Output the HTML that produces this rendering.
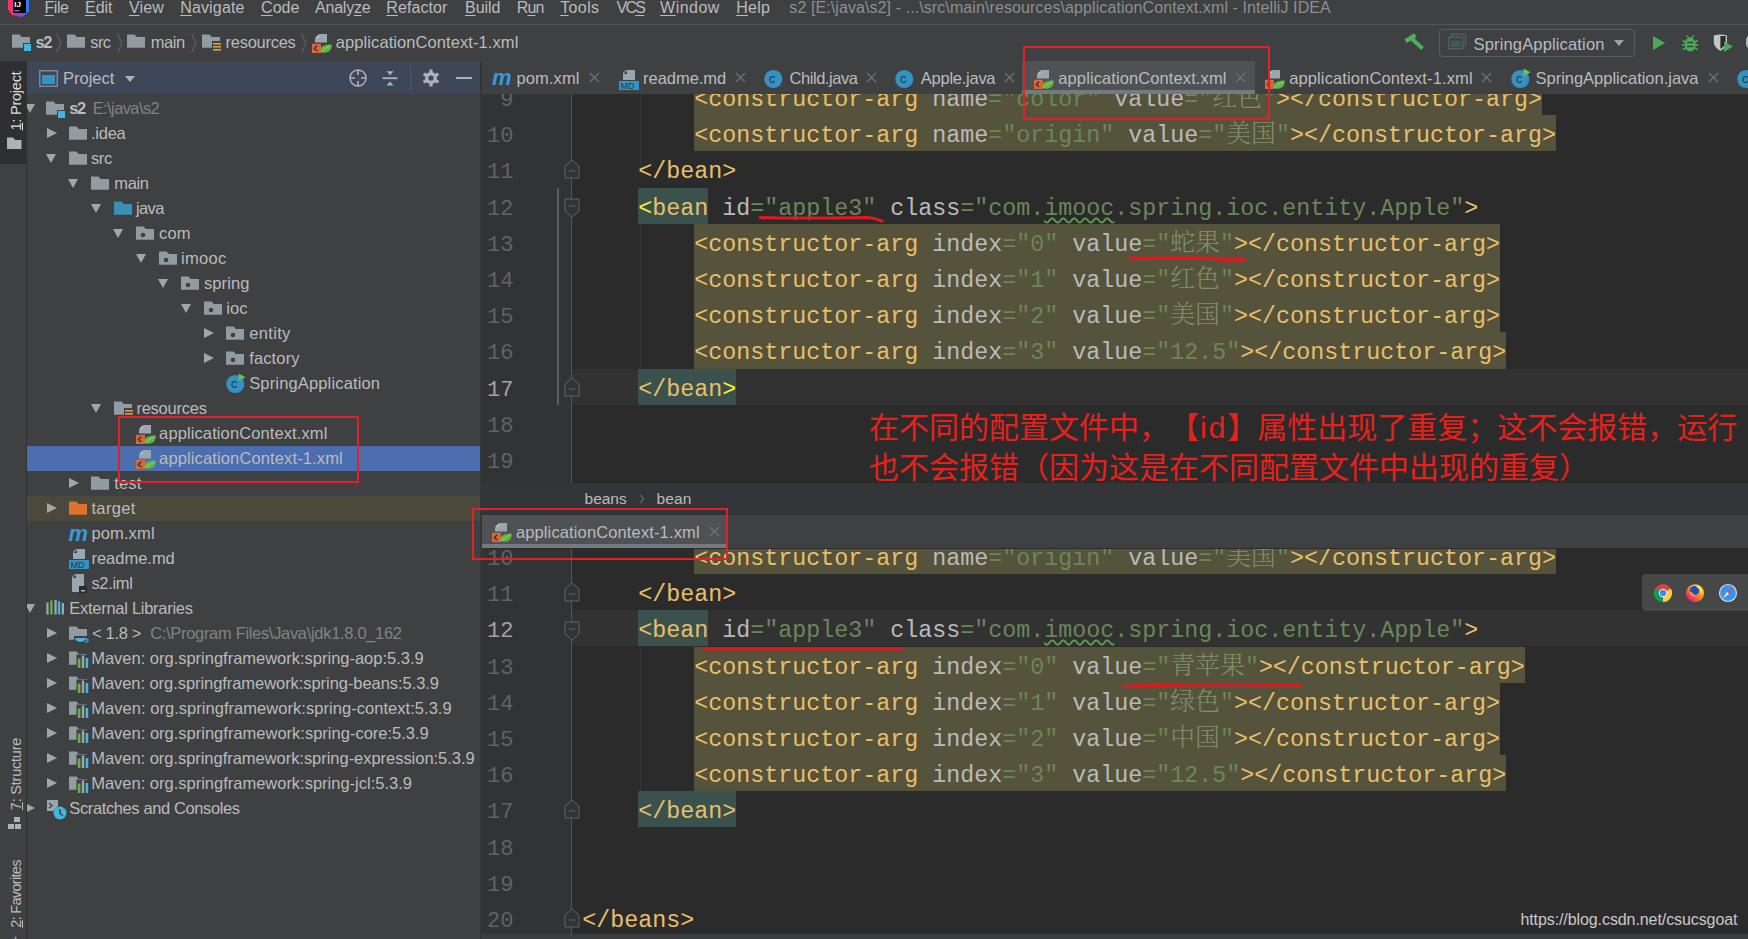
<!DOCTYPE html><html><head><meta charset="utf-8"><title>IntelliJ IDEA</title><style>
*{box-sizing:border-box;margin:0;padding:0}
html,body{width:1748px;height:939px;overflow:hidden;background:#2b2b2b}
body{position:relative;font-family:"Liberation Sans", "Noto Sans CJK SC", sans-serif;font-size:16.5px;color:#bbbbbb;-webkit-font-smoothing:antialiased}
.abs{position:absolute}
#menubar{left:0;top:0;width:1748px;height:25px;background:#3e4042;border-bottom:1px solid #515354}
#menubar span{position:absolute;top:-2px;font-size:16px;color:#bbbbbb;white-space:nowrap;line-height:20px}
#menubar u{text-decoration:underline;text-underline-offset:1.5px;text-decoration-thickness:1px}
#navbar{left:0;top:25px;width:1748px;height:36px;background:#3e4042}
#navbar .t{position:absolute;top:7px;font-size:16.5px;line-height:20px;color:#bbbbbb;white-space:nowrap}
#strip{left:0;top:61px;width:27px;height:878px;background:#3e4042;border-right:1px solid #323232}
#phead{left:27px;top:61px;width:453px;height:33px;background:#3e4758}
#tree{left:27px;top:94px;width:453px;height:845px;background:#3e4042;overflow:hidden}
.row{position:absolute;left:0;width:453px;height:25px;white-space:nowrap}
.row .lbl{position:absolute;top:2.5px;line-height:20px;font-size:16.5px;color:#bbbbbb}
.row .gray{color:#7f8486}
.arrow{position:absolute;width:0;height:0}
.ar{border-left:10px solid #a3a5a6;border-top:5.5px solid transparent;border-bottom:5.5px solid transparent}
.ad{border-top:9.5px solid #a3a5a6;border-left:5.5px solid transparent;border-right:5.5px solid transparent}
#split{left:480px;top:61px;width:2px;height:878px;background:linear-gradient(90deg,#343638 0,#343638 50%,#34373a 50%,#34373a 100%)}
.tabs{background:#3e4042;overflow:hidden}
.tab{position:absolute;top:0;height:100%;white-space:nowrap}
.tl{font-size:16.5px;line-height:20px;color:#bbbbbb;white-space:nowrap}
.tab .x{position:absolute;color:#6e7173;font-size:15px;line-height:20px}
.ed{background:#2b2b2b;overflow:hidden}
.gut{position:absolute;left:0;top:0;width:89px;height:100%;background:#313335}
.gl{position:absolute;left:89px;top:0;width:1px;height:100%;background:#555555}
.ln{position:absolute;left:0;width:31.5px;text-align:right;font-family:"Liberation Mono", "Noto Serif CJK SC", monospace;font-size:22px;color:#606366;line-height:calc(var(--lh) + 1.2px);height:36.2px}
.cl{position:absolute;left:0;height:36.2px;line-height:36.2px;font-family:"Liberation Mono", "Noto Serif CJK SC", monospace;font-size:23.33px;white-space:pre;color:#a9b7c6}
.cl span{display:inline-block;height:36.2px;vertical-align:top;line-height:var(--lh)}
.cl span span{display:inline;line-height:inherit}
.cj{position:relative;top:0px;line-height:0;font-style:normal;font-size:24.9px;font-weight:300;color:#7f8f6c;font-family:"Noto Serif CJK SC",serif}
.t{color:#e8bf6a}
.a{color:#bababa}
.v{color:#6a8759}
.w{background:#55533c}
.m{background:#3b514d}
.cur{position:absolute;left:89px;right:0;height:36.2px;background:#323232}
</style></head><body>
<div id="menubar" class="abs">
<svg class="abs" style="left:8px;top:0" width="22" height="18" viewBox="0 0 22 18"><path d="M0 0 H21 L21 11 L14 17 L4 15 L0 9 Z" fill="#9a3fd8"/><path d="M0 0 H6 V15.4 L4 15 L0 9 Z" fill="#f0356b"/><path d="M16 0 H21 V11 L16 15.3 Z" fill="#2f7cf6"/><rect x="5" y="0" width="13" height="13" fill="#000"/><rect x="6.5" y="10.2" width="5" height="1.1" fill="#aaa"/><text x="6.3" y="7.3" font-size="8" font-weight="bold" fill="#fff" font-family="Liberation Sans, sans-serif">IJ</text></svg>
<span style="left:44.5px;letter-spacing:-0.449px;"><u>F</u>ile</span>
<span style="left:85px;letter-spacing:-0.020px;"><u>E</u>dit</span>
<span style="left:128.9px;letter-spacing:0.198px;"><u>V</u>iew</span>
<span style="left:180.2px;letter-spacing:0.155px;"><u>N</u>avigate</span>
<span style="left:261px;letter-spacing:0.059px;"><u>C</u>ode</span>
<span style="left:315px;letter-spacing:-0.220px;">Analy<u>z</u>e</span>
<span style="left:386.3px;letter-spacing:0.089px;"><u>R</u>efactor</span>
<span style="left:465px;letter-spacing:-0.056px;"><u>B</u>uild</span>
<span style="left:516.7px;letter-spacing:-0.792px;">R<u>u</u>n</span>
<span style="left:560.2px;letter-spacing:0.388px;"><u>T</u>ools</span>
<span style="left:616.6px;letter-spacing:-1.735px;">VC<u>S</u></span>
<span style="left:660.1px;letter-spacing:0.463px;"><u>W</u>indow</span>
<span style="left:736.2px;letter-spacing:0.270px;"><u>H</u>elp</span>
<span style="left:789.3px;color:#8c8f91;letter-spacing:0.090px;">s2 [E:\java\s2] - ...\src\main\resources\applicationContext.xml - IntelliJ IDEA</span>
</div>
<div id="navbar" class="abs">
<svg class="abs" style="left:12px;top:8px" width="22" height="19.3" viewBox="0 0 22 19.3"><path d="M0 1.5 h7.56 l2.2 2.5 h8.239999999999998 v10.8 h-18 z" fill="#909ba2"/><rect x="11" y="10" width="8" height="8" fill="#3e4042"/><rect x="12" y="11" width="7" height="7" fill="#40b6e0"/></svg>
<span class="t" style="left:35.5px;font-weight:bold;letter-spacing:-1.430px;">s2</span>
<svg class="abs" style="left:67px;top:8px" width="22" height="19.3" viewBox="0 0 22 19.3"><path d="M0 1.5 h7.56 l2.2 2.5 h8.239999999999998 v10.8 h-18 z" fill="#909ba2"/></svg>
<span class="t" style="left:90.2px;font-weight:normal;letter-spacing:-0.533px;">src</span>
<svg class="abs" style="left:127px;top:8px" width="22" height="19.3" viewBox="0 0 22 19.3"><path d="M0 1.5 h7.56 l2.2 2.5 h8.239999999999998 v10.8 h-18 z" fill="#909ba2"/></svg>
<span class="t" style="left:150.8px;font-weight:normal;letter-spacing:-0.441px;">main</span>
<svg class="abs" style="left:202px;top:8px" width="22" height="19.3" viewBox="0 0 22 19.3"><path d="M0 1.5 h7.56 l2.2 2.5 h8.239999999999998 v10.8 h-18 z" fill="#909ba2"/><rect x="10" y="8" width="9" height="10" fill="#3e4042"/><rect x="11" y="10" width="8" height="1.6" fill="#d9a343"/><rect x="11" y="13" width="8" height="1.6" fill="#d9a343"/><rect x="11" y="16" width="8" height="1.6" fill="#d9a343"/></svg>
<span class="t" style="left:225.5px;font-weight:normal;letter-spacing:-0.261px;">resources</span>
<svg class="abs" style="left:312px;top:7.6px" width="22" height="22" viewBox="0 0 22 22"><path d="M7.5 1 H15 V9.6 H3 V5.5 Z" fill="#9aa7b0"/><path d="M6.8 1.2 V4.8 H3.2 Z" fill="#b9c3c9"/><rect x="0" y="10.8" width="9" height="9.2" fill="#d4683a"/><path d="M5.2 12.8 L2.3 15.4 L5.2 18" stroke="#4a2a1c" fill="none" stroke-width="1.3"/><path d="M8.6 18.6 C7.6 14 11.5 11.6 19.6 11.6 C20.4 17.5 15.5 21 9.6 19.4 Z" fill="#62b543"/><path d="M9.2 18.8 C12 16 15 14.4 18.4 13" stroke="#9ad77f" fill="none" stroke-width="0.8"/></svg>
<span class="t" style="left:335.8px;font-weight:normal;letter-spacing:0.080px;">applicationContext-1.xml</span>
<svg class="abs" style="left:54.5px;top:6px" width="8" height="24" viewBox="0 0 8 24"><path d="M1.5 2.5 L6 12 L1.5 21.5" stroke="#5e6163" fill="none" stroke-width="1.1"/></svg>
<svg class="abs" style="left:115.5px;top:6px" width="8" height="24" viewBox="0 0 8 24"><path d="M1.5 2.5 L6 12 L1.5 21.5" stroke="#5e6163" fill="none" stroke-width="1.1"/></svg>
<svg class="abs" style="left:189.5px;top:6px" width="8" height="24" viewBox="0 0 8 24"><path d="M1.5 2.5 L6 12 L1.5 21.5" stroke="#5e6163" fill="none" stroke-width="1.1"/></svg>
<svg class="abs" style="left:300px;top:6px" width="8" height="24" viewBox="0 0 8 24"><path d="M1.5 2.5 L6 12 L1.5 21.5" stroke="#5e6163" fill="none" stroke-width="1.1"/></svg>
<svg class="abs" style="left:1400px;top:5px" width="28" height="24" viewBox="0 0 28 24"><g stroke="#4fae5b" fill="none"><path d="M11.5 8.5 L22.6 18.6" stroke-width="4"/><path d="M5.6 11.2 L15.4 5.2" stroke-width="4.4"/></g></svg>
<div class="abs" style="left:1439px;top:4px;width:196px;height:27.5px;border:1px solid #5a5d5f;border-radius:4px"></div>
<svg class="abs" style="left:1448px;top:8px" width="20" height="18" viewBox="0 0 20 18"><rect x="3.7" y="1.2" width="14" height="11.5" fill="none" stroke="#585c5e" stroke-width="1.4"/><rect x="0.7" y="4.2" width="14" height="11.5" fill="#3e4042" stroke="#585c5e" stroke-width="1.4"/><rect x="2.6" y="7.4" width="10.2" height="6.6" fill="#3f5a52"/></svg>
<span class="t" style="left:1473.5px;top:8.5px;letter-spacing:0.158px;">SpringApplication</span>
<div class="abs" style="left:1614px;top:15px;width:0;height:0;border-top:6px solid #9da0a2;border-left:5px solid transparent;border-right:5px solid transparent"></div>
<div class="abs" style="left:1653px;top:10.8px;width:0;height:0;border-left:12px solid #4aaa55;border-top:7.2px solid transparent;border-bottom:7.2px solid transparent"></div>
<svg class="abs" style="left:1680px;top:8px" width="20" height="20" viewBox="0 0 20 20"><g fill="#4aaa55"><ellipse cx="10.2" cy="11.6" rx="5.6" ry="7"/><path d="M6 3 l1 -1 l3.2 3.4 l3.2 -3.4 l1 1 l-3.4 3.6 h-1.6 z"/></g><path d="M2.6 7.6 l3 1.6 M17.8 7.6 l-3 1.6 M2 12 h3 M18.4 12 h-3 M2.8 16.6 l3 -1.6 M17.6 16.6 l-3 -1.6" stroke="#4aaa55" stroke-width="1.7"/><path d="M7.2 9.6 h6 M7.2 13.4 h6" stroke="#3e4042" stroke-width="1.5"/></svg>
<svg class="abs" style="left:1712px;top:8px" width="24" height="22" viewBox="0 0 24 22"><path d="M1.8 2.6 Q8.4 0.6 15 2.6 V9 C15 14.5 8.4 17.8 8.4 17.8 C8.4 17.8 1.8 14.5 1.8 9 Z" fill="#c4c6c8"/><path d="M8.4 3 H13.6 V9.6 C13.600 13 8.4 16 8.4 16 Z" fill="#2b2b2b"/><path d="M12 8.4 l8.8 5.2 l-8.8 5.4 z" fill="#4aaa55"/></svg>
<div class="abs" style="left:1745.5px;top:10px;width:10px;height:14px;border-radius:7px;background:#afb1b3"></div>
</div>
<div id="strip" class="abs">
<div class="abs" style="left:0;top:0;width:27px;height:103px;background:#2d2f30"></div>
<div class="abs" style="left:15.6px;top:40px;width:0;height:0"><div style="position:absolute;transform:translate(-50%,-50%) rotate(-90deg);white-space:nowrap;font-size:14.5px;line-height:16px;color:#dcdcdc;letter-spacing:-0.227px;"><u>1</u>: Project</div></div>
<svg class="abs" style="left:7px;top:75px" width="18.5" height="17.5" viewBox="0 0 18.5 17.5"><path d="M0 1.5 h6.09 l2.2 2.5 h6.21 v9.0 h-14.5 z" fill="#afb1b3"/></svg>
<div class="abs" style="left:15.6px;top:713px;width:0;height:0"><div style="position:absolute;transform:translate(-50%,-50%) rotate(-90deg);white-space:nowrap;font-size:14.5px;line-height:16px;color:#bbbbbb;letter-spacing:-0.214px;"><u>7</u>: Structure</div></div>
<svg class="abs" style="left:8px;top:756px" width="14" height="14" viewBox="0 0 14 14"><rect x="6" y="0" width="6" height="5" fill="#afb1b3"/><rect x="0" y="7" width="6" height="5" fill="#afb1b3"/><rect x="7" y="7" width="6" height="5" fill="#afb1b3"/></svg>
<div class="abs" style="left:15.6px;top:832.8px;width:0;height:0"><div style="position:absolute;transform:translate(-50%,-50%) rotate(-90deg);white-space:nowrap;font-size:14.5px;line-height:16px;color:#bbbbbb;letter-spacing:-0.689px;"><u>2</u>: Favorites</div></div>
<div class="abs" style="left:9px;top:870px;color:#afb1b3;font-size:13px">★</div>
</div>
<div id="phead" class="abs">
<svg class="abs" style="left:12px;top:9px" width="20" height="18" viewBox="0 0 20 18"><rect x="0.75" y="0.75" width="17.5" height="15.5" fill="none" stroke="#7c8791" stroke-width="1.5"/><rect x="3" y="5" width="13" height="9" fill="#3592c4"/></svg>
<span class="abs" style="left:36px;top:7px;font-size:16.5px;line-height:20px;color:#bbbbbb">Project</span>
<div class="abs" style="left:98px;top:15px;width:0;height:0;border-top:6px solid #afb1b3;border-left:5.5px solid transparent;border-right:5.5px solid transparent"></div>
<svg class="abs" style="left:321px;top:7px" width="20" height="20" viewBox="0 0 20 20"><circle cx="10" cy="10" r="8" fill="none" stroke="#afb1b3" stroke-width="1.5"/><path d="M10 2 v5 M10 13 v5 M2 10 h5 M13 10 h5" stroke="#afb1b3" stroke-width="1.6"/></svg>
<svg class="abs" style="left:354px;top:6px" width="18" height="22" viewBox="0 0 18 22"><path d="M1.5 11.2 h15" stroke="#afb1b3" stroke-width="1.8"/><path d="M5.5 4.2 h7 l-3.5 4 z M5.5 18.4 h7 l-3.5 -4 z" fill="#afb1b3"/></svg>
<div class="abs" style="left:383px;top:4px;width:1px;height:26px;background:#4d5666"></div>
<svg class="abs" style="left:394.8px;top:8px" width="18" height="18" viewBox="0 0 18 18"><g fill="#afb1b3"><circle cx="9" cy="9" r="6"/><rect x="7.4" y="0.5" width="3.2" height="17" rx="0.6"/><rect x="7.4" y="0.5" width="3.2" height="17" rx="0.6" transform="rotate(60 9 9)"/><rect x="7.4" y="0.5" width="3.2" height="17" rx="0.6" transform="rotate(120 9 9)"/></g><circle cx="9" cy="9" r="2.6" fill="#3e4758"/></svg>
<div class="abs" style="left:429px;top:16px;width:16px;height:2px;background:#afb1b3"></div>
</div>
<div id="tree" class="abs">
<div class="row" style="top:1.5px;">
<div class="arrow ad" style="left:-2.5px;top:8px"></div>
<svg class="abs" style="left:19px;top:4px" width="22" height="19.3" viewBox="0 0 22 19.3"><path d="M0 1.5 h7.56 l2.2 2.5 h8.239999999999998 v10.8 h-18 z" fill="#909ba2"/><rect x="11" y="10" width="8" height="8" fill="#3e4042"/><rect x="12" y="11" width="7" height="7" fill="#40b6e0"/></svg>
<span class="lbl" style="left:42.3px;font-weight:bold;letter-spacing:-1.530px;">s2</span>
<span class="lbl gray" style="left:65.7px;letter-spacing:-0.597px;">E:\java\s2</span>
</div>
<div class="row" style="top:26.5px;">
<div class="arrow ar" style="left:20px;top:7px"></div>
<svg class="abs" style="left:42px;top:4px" width="22" height="19.3" viewBox="0 0 22 19.3"><path d="M0 1.5 h7.56 l2.2 2.5 h8.239999999999998 v10.8 h-18 z" fill="#909ba2"/></svg>
<span class="lbl" style="left:64px;font-weight:normal;letter-spacing:-0.256px;">.idea</span>
</div>
<div class="row" style="top:51.5px;">
<div class="arrow ad" style="left:19px;top:8px"></div>
<svg class="abs" style="left:42px;top:4px" width="22" height="19.3" viewBox="0 0 22 19.3"><path d="M0 1.5 h7.56 l2.2 2.5 h8.239999999999998 v10.8 h-18 z" fill="#909ba2"/></svg>
<span class="lbl" style="left:64px;font-weight:normal;letter-spacing:-0.400px;">src</span>
</div>
<div class="row" style="top:76.5px;">
<div class="arrow ad" style="left:41px;top:8px"></div>
<svg class="abs" style="left:64px;top:4px" width="22" height="19.3" viewBox="0 0 22 19.3"><path d="M0 1.5 h7.56 l2.2 2.5 h8.239999999999998 v10.8 h-18 z" fill="#909ba2"/></svg>
<span class="lbl" style="left:87.3px;font-weight:normal;letter-spacing:-0.391px;">main</span>
</div>
<div class="row" style="top:101.5px;">
<div class="arrow ad" style="left:64px;top:8px"></div>
<svg class="abs" style="left:87px;top:4px" width="22" height="19.3" viewBox="0 0 22 19.3"><path d="M0 1.5 h7.56 l2.2 2.5 h8.239999999999998 v10.8 h-18 z" fill="#3a8fb7"/></svg>
<span class="lbl" style="left:109px;font-weight:normal;letter-spacing:-0.620px;">java</span>
</div>
<div class="row" style="top:126.5px;">
<div class="arrow ad" style="left:86px;top:8px"></div>
<svg class="abs" style="left:109px;top:4px" width="22" height="19.3" viewBox="0 0 22 19.3"><path d="M0 1.5 h7.56 l2.2 2.5 h8.239999999999998 v10.8 h-18 z" fill="#909ba2"/><circle cx="7" cy="10" r="2.3" fill="#3e4042"/></svg>
<span class="lbl" style="left:132px;font-weight:normal;letter-spacing:0.143px;">com</span>
</div>
<div class="row" style="top:151.5px;">
<div class="arrow ad" style="left:109px;top:8px"></div>
<svg class="abs" style="left:132px;top:4px" width="22" height="19.3" viewBox="0 0 22 19.3"><path d="M0 1.5 h7.56 l2.2 2.5 h8.239999999999998 v10.8 h-18 z" fill="#909ba2"/><circle cx="7" cy="10" r="2.3" fill="#3e4042"/></svg>
<span class="lbl" style="left:154px;font-weight:normal;letter-spacing:0.337px;">imooc</span>
</div>
<div class="row" style="top:176.5px;">
<div class="arrow ad" style="left:131px;top:8px"></div>
<svg class="abs" style="left:154px;top:4px" width="22" height="19.3" viewBox="0 0 22 19.3"><path d="M0 1.5 h7.56 l2.2 2.5 h8.239999999999998 v10.8 h-18 z" fill="#909ba2"/><circle cx="7" cy="10" r="2.3" fill="#3e4042"/></svg>
<span class="lbl" style="left:177px;font-weight:normal;letter-spacing:0.074px;">spring</span>
</div>
<div class="row" style="top:201.5px;">
<div class="arrow ad" style="left:154px;top:8px"></div>
<svg class="abs" style="left:177px;top:4px" width="22" height="19.3" viewBox="0 0 22 19.3"><path d="M0 1.5 h7.56 l2.2 2.5 h8.239999999999998 v10.8 h-18 z" fill="#909ba2"/><circle cx="7" cy="10" r="2.3" fill="#3e4042"/></svg>
<span class="lbl" style="left:199.2px;font-weight:normal;letter-spacing:0.102px;">ioc</span>
</div>
<div class="row" style="top:226.5px;">
<div class="arrow ar" style="left:177px;top:7px"></div>
<svg class="abs" style="left:199px;top:4px" width="22" height="19.3" viewBox="0 0 22 19.3"><path d="M0 1.5 h7.56 l2.2 2.5 h8.239999999999998 v10.8 h-18 z" fill="#909ba2"/><circle cx="7" cy="10" r="2.3" fill="#3e4042"/></svg>
<span class="lbl" style="left:222.2px;font-weight:normal;letter-spacing:0.344px;">entity</span>
</div>
<div class="row" style="top:251.5px;">
<div class="arrow ar" style="left:177px;top:7px"></div>
<svg class="abs" style="left:199px;top:4px" width="22" height="19.3" viewBox="0 0 22 19.3"><path d="M0 1.5 h7.56 l2.2 2.5 h8.239999999999998 v10.8 h-18 z" fill="#909ba2"/><circle cx="7" cy="10" r="2.3" fill="#3e4042"/></svg>
<span class="lbl" style="left:222.2px;font-weight:normal;letter-spacing:0.138px;">factory</span>
</div>
<div class="row" style="top:276.5px;">
<svg class="abs" style="left:199px;top:2px" width="22" height="22" viewBox="0 0 22 22"><circle cx="9.3" cy="11" r="9.1" fill="#3591c1"/><text x="4.9" y="15.2" font-size="12.5" fill="#25384a" font-family="Liberation Sans, sans-serif">c</text><path d="M12.6 0.6 l7 3.6 l-7 3.8 z" fill="#62c554"/></svg>
<span class="lbl" style="left:222.2px;font-weight:normal;letter-spacing:0.152px;">SpringApplication</span>
</div>
<div class="row" style="top:301.5px;">
<div class="arrow ad" style="left:64px;top:8px"></div>
<svg class="abs" style="left:87px;top:4px" width="22" height="19.3" viewBox="0 0 22 19.3"><path d="M0 1.5 h7.56 l2.2 2.5 h8.239999999999998 v10.8 h-18 z" fill="#909ba2"/><rect x="10" y="8" width="9" height="10" fill="#3e4042"/><rect x="11" y="10" width="8" height="1.6" fill="#d9a343"/><rect x="11" y="13" width="8" height="1.6" fill="#d9a343"/><rect x="11" y="16" width="8" height="1.6" fill="#d9a343"/></svg>
<span class="lbl" style="left:109.4px;font-weight:normal;letter-spacing:-0.239px;">resources</span>
</div>
<div class="row" style="top:326.5px;">
<svg class="abs" style="left:109px;top:3.3px" width="22" height="22" viewBox="0 0 22 22"><path d="M7.5 1 H15 V9.6 H3 V5.5 Z" fill="#9aa7b0"/><path d="M6.8 1.2 V4.8 H3.2 Z" fill="#b9c3c9"/><rect x="0" y="10.8" width="9" height="9.2" fill="#d4683a"/><path d="M5.2 12.8 L2.3 15.4 L5.2 18" stroke="#4a2a1c" fill="none" stroke-width="1.3"/><path d="M8.6 18.6 C7.6 14 11.5 11.6 19.6 11.6 C20.4 17.5 15.5 21 9.6 19.4 Z" fill="#62b543"/><path d="M9.2 18.8 C12 16 15 14.4 18.4 13" stroke="#9ad77f" fill="none" stroke-width="0.8"/></svg>
<span class="lbl" style="left:132.1px;font-weight:normal;letter-spacing:0.109px;">applicationContext.xml</span>
</div>
<div class="row" style="top:351.5px;background:#4b6eaf;">
<svg class="abs" style="left:109px;top:3.3px" width="22" height="22" viewBox="0 0 22 22"><path d="M7.5 1 H15 V9.6 H3 V5.5 Z" fill="#9aa7b0"/><path d="M6.8 1.2 V4.8 H3.2 Z" fill="#b9c3c9"/><rect x="0" y="10.8" width="9" height="9.2" fill="#d4683a"/><path d="M5.2 12.8 L2.3 15.4 L5.2 18" stroke="#4a2a1c" fill="none" stroke-width="1.3"/><path d="M8.6 18.6 C7.6 14 11.5 11.6 19.6 11.6 C20.4 17.5 15.5 21 9.6 19.4 Z" fill="#62b543"/><path d="M9.2 18.8 C12 16 15 14.4 18.4 13" stroke="#9ad77f" fill="none" stroke-width="0.8"/></svg>
<span class="lbl" style="left:132.1px;font-weight:normal;letter-spacing:0.130px;">applicationContext-1.xml</span>
</div>
<div class="row" style="top:376.5px;">
<div class="arrow ar" style="left:42px;top:7px"></div>
<svg class="abs" style="left:64px;top:4px" width="22" height="19.3" viewBox="0 0 22 19.3"><path d="M0 1.5 h7.56 l2.2 2.5 h8.239999999999998 v10.8 h-18 z" fill="#909ba2"/></svg>
<span class="lbl" style="left:87.3px;font-weight:normal;letter-spacing:0.148px;">test</span>
</div>
<div class="row" style="top:401.5px;background:#4b493c;">
<div class="arrow ar" style="left:20px;top:7px"></div>
<svg class="abs" style="left:42px;top:4px" width="22" height="19.3" viewBox="0 0 22 19.3"><path d="M0 1.5 h7.56 l2.2 2.5 h8.239999999999998 v10.8 h-18 z" fill="#e0702d"/></svg>
<span class="lbl" style="left:64.4px;font-weight:normal;letter-spacing:0.366px;">target</span>
</div>
<div class="row" style="top:426.5px;">
<span class="abs" style="left:41.5px;top:3.5px;font:italic bold 22px/20px 'Liberation Sans',sans-serif;color:#3a9ad9">m</span>
<span class="lbl" style="left:64.4px;font-weight:normal;letter-spacing:0.137px;">pom.xml</span>
</div>
<div class="row" style="top:451.5px;">
<svg class="abs" style="left:42px;top:2.7px" width="22" height="24" viewBox="0 0 22 24"><path d="M7 1 h9 v10 h-12 v-7 z" fill="#9aa7b0"/><path d="M8 1.5 v3.5 h-3.5 z" fill="#3e4042"/><rect x="0" y="12" width="20" height="9" fill="#3592c4"/><text x="1.5" y="20" font-size="9" fill="#1d3a4d" font-family="Liberation Sans, sans-serif">MD</text></svg>
<span class="lbl" style="left:64.4px;font-weight:normal;letter-spacing:-0.006px;">readme.md</span>
</div>
<div class="row" style="top:476.5px;">
<svg class="abs" style="left:42px;top:2.7px" width="22" height="24" viewBox="0 0 22 24"><path d="M6 1 h9 v18 h-12 v-15 z" fill="#9aa7b0"/><path d="M7 1.5 v3.5 h-3.5 z" fill="#3e4042"/><rect x="10" y="13" width="8" height="7" fill="#2b2b2b"/><rect x="12" y="17" width="4" height="1.5" fill="#bbb"/></svg>
<span class="lbl" style="left:64.4px;font-weight:normal;letter-spacing:-0.316px;">s2.iml</span>
</div>
<div class="row" style="top:501.5px;">
<div class="arrow ad" style="left:-2.5px;top:8px"></div>
<svg class="abs" style="left:19px;top:2.5px" width="22" height="20" viewBox="0 0 22 20"><rect x="0.3" y="4.5" width="2.3" height="12" fill="#9aa7b0"/><rect x="4.2" y="2.4" width="2.3" height="14.1" fill="#62b543"/><rect x="8.4" y="2" width="2.3" height="14.5" fill="#9aa7b0"/><rect x="11.9" y="3.3" width="2.3" height="13.2" fill="#40b6e0"/><rect x="15.7" y="5" width="2.3" height="11.5" fill="#9aa7b0"/></svg>
<span class="lbl" style="left:42.3px;font-weight:normal;letter-spacing:-0.277px;">External Libraries</span>
</div>
<div class="row" style="top:526.5px;">
<div class="arrow ar" style="left:20px;top:7px"></div>
<svg class="abs" style="left:42px;top:4px" width="22" height="19.3" viewBox="0 0 22 19.3"><path d="M0 1.5 h7.56 l2.2 2.5 h8.239999999999998 v10.8 h-18 z" fill="#909ba2"/><rect x="5" y="11" width="14" height="9" fill="#3e4042"/><path d="M6 13 h11 c0 5 -11 5 -11 0z" fill="#40b6e0"/><path d="M17 14 c3 0 3 3 -1 3" stroke="#40b6e0" fill="none" stroke-width="1.2"/></svg>
<span class="lbl" style="left:65px;font-weight:normal;letter-spacing:-0.313px;">&lt; 1.8 &gt;</span>
<span class="lbl gray" style="left:123.19999999999999px;letter-spacing:-0.318px;">C:\Program Files\Java\jdk1.8.0_162</span>
</div>
<div class="row" style="top:551.5px;">
<div class="arrow ar" style="left:20px;top:7px"></div>
<svg class="abs" style="left:42px;top:4px" width="22" height="19.3" viewBox="0 0 22 19.3"><path d="M0 1.5 h7.56 l2.2 2.5 h8.239999999999998 v10.8 h-18 z" fill="#909ba2"/><rect x="7.5" y="4.5" width="13" height="14" fill="#3e4042"/><rect x="8.8" y="8.5" width="2.6" height="9.5" fill="#62b543"/><rect x="12.8" y="5.5" width="2.4" height="12.5" fill="#9aa7b0"/><rect x="16.6" y="8" width="2.6" height="10" fill="#40b6e0"/></svg>
<span class="lbl" style="left:64.2px;font-weight:normal;letter-spacing:-0.010px;">Maven: org.springframework:spring-aop:5.3.9</span>
</div>
<div class="row" style="top:576.5px;">
<div class="arrow ar" style="left:20px;top:7px"></div>
<svg class="abs" style="left:42px;top:4px" width="22" height="19.3" viewBox="0 0 22 19.3"><path d="M0 1.5 h7.56 l2.2 2.5 h8.239999999999998 v10.8 h-18 z" fill="#909ba2"/><rect x="7.5" y="4.5" width="13" height="14" fill="#3e4042"/><rect x="8.8" y="8.5" width="2.6" height="9.5" fill="#62b543"/><rect x="12.8" y="5.5" width="2.4" height="12.5" fill="#9aa7b0"/><rect x="16.6" y="8" width="2.6" height="10" fill="#40b6e0"/></svg>
<span class="lbl" style="left:64.2px;font-weight:normal;letter-spacing:-0.057px;">Maven: org.springframework:spring-beans:5.3.9</span>
</div>
<div class="row" style="top:601.5px;">
<div class="arrow ar" style="left:20px;top:7px"></div>
<svg class="abs" style="left:42px;top:4px" width="22" height="19.3" viewBox="0 0 22 19.3"><path d="M0 1.5 h7.56 l2.2 2.5 h8.239999999999998 v10.8 h-18 z" fill="#909ba2"/><rect x="7.5" y="4.5" width="13" height="14" fill="#3e4042"/><rect x="8.8" y="8.5" width="2.6" height="9.5" fill="#62b543"/><rect x="12.8" y="5.5" width="2.4" height="12.5" fill="#9aa7b0"/><rect x="16.6" y="8" width="2.6" height="10" fill="#40b6e0"/></svg>
<span class="lbl" style="left:64.2px;font-weight:normal;letter-spacing:0.041px;">Maven: org.springframework:spring-context:5.3.9</span>
</div>
<div class="row" style="top:626.5px;">
<div class="arrow ar" style="left:20px;top:7px"></div>
<svg class="abs" style="left:42px;top:4px" width="22" height="19.3" viewBox="0 0 22 19.3"><path d="M0 1.5 h7.56 l2.2 2.5 h8.239999999999998 v10.8 h-18 z" fill="#909ba2"/><rect x="7.5" y="4.5" width="13" height="14" fill="#3e4042"/><rect x="8.8" y="8.5" width="2.6" height="9.5" fill="#62b543"/><rect x="12.8" y="5.5" width="2.4" height="12.5" fill="#9aa7b0"/><rect x="16.6" y="8" width="2.6" height="10" fill="#40b6e0"/></svg>
<span class="lbl" style="left:64.2px;font-weight:normal;letter-spacing:0.003px;">Maven: org.springframework:spring-core:5.3.9</span>
</div>
<div class="row" style="top:651.5px;">
<div class="arrow ar" style="left:20px;top:7px"></div>
<svg class="abs" style="left:42px;top:4px" width="22" height="19.3" viewBox="0 0 22 19.3"><path d="M0 1.5 h7.56 l2.2 2.5 h8.239999999999998 v10.8 h-18 z" fill="#909ba2"/><rect x="7.5" y="4.5" width="13" height="14" fill="#3e4042"/><rect x="8.8" y="8.5" width="2.6" height="9.5" fill="#62b543"/><rect x="12.8" y="5.5" width="2.4" height="12.5" fill="#9aa7b0"/><rect x="16.6" y="8" width="2.6" height="10" fill="#40b6e0"/></svg>
<span class="lbl" style="left:64.2px;font-weight:normal;letter-spacing:-0.035px;">Maven: org.springframework:spring-expression:5.3.9</span>
</div>
<div class="row" style="top:676.5px;">
<div class="arrow ar" style="left:20px;top:7px"></div>
<svg class="abs" style="left:42px;top:4px" width="22" height="19.3" viewBox="0 0 22 19.3"><path d="M0 1.5 h7.56 l2.2 2.5 h8.239999999999998 v10.8 h-18 z" fill="#909ba2"/><rect x="7.5" y="4.5" width="13" height="14" fill="#3e4042"/><rect x="8.8" y="8.5" width="2.6" height="9.5" fill="#62b543"/><rect x="12.8" y="5.5" width="2.4" height="12.5" fill="#9aa7b0"/><rect x="16.6" y="8" width="2.6" height="10" fill="#40b6e0"/></svg>
<span class="lbl" style="left:64.2px;font-weight:normal;letter-spacing:-0.006px;">Maven: org.springframework:spring-jcl:5.3.9</span>
</div>
<div class="row" style="top:701.5px;">
<div class="arrow ar" style="left:-2.5px;top:7px"></div>
<svg class="abs" style="left:19px;top:3px" width="24" height="24" viewBox="0 0 24 24"><path d="M1 1 h11 l0 6 l-5 5 h-6 z" fill="#9aa7b0"/><path d="M3 4 l3 2.5 l-3 2.5" stroke="#3e4042" fill="none" stroke-width="1.3"/><circle cx="14" cy="14" r="6.5" fill="#40b6e0"/><path d="M14 10 v4.5 l3 2" stroke="#3e4042" fill="none" stroke-width="1.5"/></svg>
<span class="lbl" style="left:42.3px;font-weight:normal;letter-spacing:-0.385px;">Scratches and Consoles</span>
</div>
</div>
<div id="split" class="abs"></div>
<div class="abs tabs" style="left:482px;top:61px;width:1266px;height:33px">
<span class="abs" style="left:10px;top:7px;font:italic bold 22px/20px 'Liberation Sans',sans-serif;color:#3a9ad9">m</span><span class="tl abs" style="left:34.5px;top:7px;letter-spacing:0.094px;">pom.xml</span><svg class="abs" style="left:107.20000000000005px;top:11px" width="11" height="11" viewBox="0 0 11 11"><path d="M1 1 L10 10 M10 1 L1 10" stroke="#6e7173" stroke-width="1.3"/></svg>
<svg class="abs" style="left:137px;top:7.5px" width="22" height="24" viewBox="0 0 22 24"><path d="M7 1 h9 v10 h-12 v-7 z" fill="#9aa7b0"/><path d="M8 1.5 v3.5 h-3.5 z" fill="#3e4042"/><rect x="0" y="12" width="20" height="9" fill="#3592c4"/><text x="1.5" y="20" font-size="9" fill="#1d3a4d" font-family="Liberation Sans, sans-serif">MD</text></svg><span class="tl abs" style="left:161.10000000000002px;top:7px;letter-spacing:-0.039px;">readme.md</span><svg class="abs" style="left:252.79999999999995px;top:11px" width="11" height="11" viewBox="0 0 11 11"><path d="M1 1 L10 10 M10 1 L1 10" stroke="#6e7173" stroke-width="1.3"/></svg>
<svg class="abs" style="left:281.79999999999995px;top:7.3px" width="22" height="22" viewBox="0 0 22 22"><circle cx="9.3" cy="11" r="9.1" fill="#3591c1"/><text x="4.9" y="15.2" font-size="12.5" fill="#25384a" font-family="Liberation Sans, sans-serif">c</text></svg><span class="tl abs" style="left:307.5px;top:7px;letter-spacing:-0.447px;">Child.java</span><svg class="abs" style="left:384px;top:11px" width="11" height="11" viewBox="0 0 11 11"><path d="M1 1 L10 10 M10 1 L1 10" stroke="#6e7173" stroke-width="1.3"/></svg>
<svg class="abs" style="left:413px;top:7.3px" width="22" height="22" viewBox="0 0 22 22"><circle cx="9.3" cy="11" r="9.1" fill="#3591c1"/><text x="4.9" y="15.2" font-size="12.5" fill="#25384a" font-family="Liberation Sans, sans-serif">c</text></svg><span class="tl abs" style="left:438.79999999999995px;top:7px;letter-spacing:-0.256px;">Apple.java</span><svg class="abs" style="left:521.5px;top:11px" width="11" height="11" viewBox="0 0 11 11"><path d="M1 1 L10 10 M10 1 L1 10" stroke="#6e7173" stroke-width="1.3"/></svg>
<div class="abs" style="left:540px;top:0;width:233px;height:100%;background:#4e5254"></div><div class="abs" style="left:540px;bottom:0;width:233px;height:4px;background:#747a80"></div><svg class="abs" style="left:552px;top:8px" width="22" height="22" viewBox="0 0 22 22"><path d="M7.5 1 H15 V9.6 H3 V5.5 Z" fill="#9aa7b0"/><path d="M6.8 1.2 V4.8 H3.2 Z" fill="#b9c3c9"/><rect x="0" y="10.8" width="9" height="9.2" fill="#d4683a"/><path d="M5.2 12.8 L2.3 15.4 L5.2 18" stroke="#4a2a1c" fill="none" stroke-width="1.3"/><path d="M8.6 18.6 C7.6 14 11.5 11.6 19.6 11.6 C20.4 17.5 15.5 21 9.6 19.4 Z" fill="#62b543"/><path d="M9.2 18.8 C12 16 15 14.4 18.4 13" stroke="#9ad77f" fill="none" stroke-width="0.8"/></svg><span class="tl abs" style="left:576.3px;top:7px;letter-spacing:0.100px;">applicationContext.xml</span><svg class="abs" style="left:753px;top:11px" width="11" height="11" viewBox="0 0 11 11"><path d="M1 1 L10 10 M10 1 L1 10" stroke="#6e7173" stroke-width="1.3"/></svg>
<svg class="abs" style="left:783px;top:8px" width="22" height="22" viewBox="0 0 22 22"><path d="M7.5 1 H15 V9.6 H3 V5.5 Z" fill="#9aa7b0"/><path d="M6.8 1.2 V4.8 H3.2 Z" fill="#b9c3c9"/><rect x="0" y="10.8" width="9" height="9.2" fill="#d4683a"/><path d="M5.2 12.8 L2.3 15.4 L5.2 18" stroke="#4a2a1c" fill="none" stroke-width="1.3"/><path d="M8.6 18.6 C7.6 14 11.5 11.6 19.6 11.6 C20.4 17.5 15.5 21 9.6 19.4 Z" fill="#62b543"/><path d="M9.2 18.8 C12 16 15 14.4 18.4 13" stroke="#9ad77f" fill="none" stroke-width="0.8"/></svg><span class="tl abs" style="left:807.2px;top:7px;letter-spacing:0.118px;">applicationContext-1.xml</span><svg class="abs" style="left:999px;top:11px" width="11" height="11" viewBox="0 0 11 11"><path d="M1 1 L10 10 M10 1 L1 10" stroke="#6e7173" stroke-width="1.3"/></svg>
<svg class="abs" style="left:1028.7px;top:7.3px" width="22" height="22" viewBox="0 0 22 22"><circle cx="9.3" cy="11" r="9.1" fill="#3591c1"/><text x="4.9" y="15.2" font-size="12.5" fill="#25384a" font-family="Liberation Sans, sans-serif">c</text><path d="M12.6 0.6 l7 3.6 l-7 3.8 z" fill="#62c554"/></svg><span class="tl abs" style="left:1053.5px;top:7px;letter-spacing:-0.013px;">SpringApplication.java</span><svg class="abs" style="left:1225.5px;top:11px" width="11" height="11" viewBox="0 0 11 11"><path d="M1 1 L10 10 M10 1 L1 10" stroke="#6e7173" stroke-width="1.3"/></svg>
<svg class="abs" style="left:1255px;top:7.3px" width="22" height="22" viewBox="0 0 22 22"><circle cx="9.3" cy="11" r="9.1" fill="#3591c1"/><text x="4.9" y="15.2" font-size="12.5" fill="#25384a" font-family="Liberation Sans, sans-serif">c</text></svg>
</div>
<div class="abs ed" style="left:482px;top:94px;width:1266px;height:388.5px;--lh:42.8px"><div class="cur" style="top:274.55px"></div><div class="gut"></div><div class="gl"></div><div class="abs" style="left:157.6px;top:0;width:1px;height:77px;background:#343637"></div><div class="abs" style="left:157.6px;top:130px;width:1px;height:144px;background:#343637"></div><div class="abs" style="left:75px;top:94px;width:2px;height:217px;background:#566160"></div><div class="ln" style="top:-15.05px;">9</div><div class="cl" style="left:100.20000000000005px;top:-15.05px">        <span class="w"><span class="t">&lt;constructor-arg</span><span class="a"> name</span><span class="v">="color"</span><span class="a"> value</span><span class="v">="<i class="cj">红色</i>"</span><span class="t">&gt;&lt;/constructor-arg&gt;</span></span></div><div class="ln" style="top:21.150000000000002px;">10</div><div class="cl" style="left:100.20000000000005px;top:21.150000000000002px">        <span class="w"><span class="t">&lt;constructor-arg</span><span class="a"> name</span><span class="v">="origin"</span><span class="a"> value</span><span class="v">="<i class="cj">美国</i>"</span><span class="t">&gt;&lt;/constructor-arg&gt;</span></span></div><div class="ln" style="top:57.35000000000001px;">11</div><svg class="abs" style="left:81.5px;top:65.35000000000001px" width="16" height="20" viewBox="0 0 16 20"><path d="M1 19 V7 L8 1 L15 7 V19 Z" fill="#313335" stroke="#606366" stroke-width="1"/><path d="M4.5 12 h7" stroke="#606366" stroke-width="1"/></svg><div class="cl" style="left:100.20000000000005px;top:57.35000000000001px">    <span class="t">&lt;/bean&gt;</span></div><div class="ln" style="top:93.55000000000001px;">12</div><svg class="abs" style="left:81.5px;top:103.85000000000001px" width="16" height="20" viewBox="0 0 16 20"><path d="M1 1 V13 L8 19 L15 13 V1 Z" fill="#313335" stroke="#606366" stroke-width="1"/><path d="M4.5 8 h7" stroke="#606366" stroke-width="1"/></svg><div class="cl" style="left:100.20000000000005px;top:93.55000000000001px">    <span class="t m"><span style="color:#ffef28">&lt;</span>bean</span><span class="a"> id</span><span class="v">="apple3"</span><span class="a"> class</span><span class="v">="com.<span style="display:inline;text-decoration:underline wavy #5f9a50 1.5px;text-underline-offset:1.5px">imooc</span>.spring.ioc.entity.Apple"</span><span class="t">&gt;</span></div><div class="ln" style="top:129.75px;">13</div><div class="cl" style="left:100.20000000000005px;top:129.75px">        <span class="w"><span class="t">&lt;constructor-arg</span><span class="a"> index</span><span class="v">="0"</span><span class="a"> value</span><span class="v">="<i class="cj">蛇果</i>"</span><span class="t">&gt;&lt;/constructor-arg&gt;</span></span></div><div class="ln" style="top:165.95px;">14</div><div class="cl" style="left:100.20000000000005px;top:165.95px">        <span class="w"><span class="t">&lt;constructor-arg</span><span class="a"> index</span><span class="v">="1"</span><span class="a"> value</span><span class="v">="<i class="cj">红色</i>"</span><span class="t">&gt;&lt;/constructor-arg&gt;</span></span></div><div class="ln" style="top:202.15px;">15</div><div class="cl" style="left:100.20000000000005px;top:202.15px">        <span class="w"><span class="t">&lt;constructor-arg</span><span class="a"> index</span><span class="v">="2"</span><span class="a"> value</span><span class="v">="<i class="cj">美国</i>"</span><span class="t">&gt;&lt;/constructor-arg&gt;</span></span></div><div class="ln" style="top:238.35000000000002px;">16</div><div class="cl" style="left:100.20000000000005px;top:238.35000000000002px">        <span class="w"><span class="t">&lt;constructor-arg</span><span class="a"> index</span><span class="v">="3"</span><span class="a"> value</span><span class="v">="12.5"</span><span class="t">&gt;&lt;/constructor-arg&gt;</span></span></div><div class="ln" style="top:274.55px;color:#a4a3a3;">17</div><svg class="abs" style="left:81.5px;top:282.55px" width="16" height="20" viewBox="0 0 16 20"><path d="M1 19 V7 L8 1 L15 7 V19 Z" fill="#313335" stroke="#606366" stroke-width="1"/><path d="M4.5 12 h7" stroke="#606366" stroke-width="1"/></svg><div class="cl" style="left:100.20000000000005px;top:274.55px">    <span class="t m">&lt;/bean<span style="color:#ffef28">&gt;</span></span></div><div class="ln" style="top:310.75px;">18</div><div class="ln" style="top:346.95px;">19</div></div>
<div class="abs" style="left:482px;top:482.5px;width:1266px;height:31px;background:#333538"></div>
<span class="abs" style="left:584.6px;top:488.5px;font-size:15.5px;line-height:20px;color:#bbbbbb;letter-spacing:-0.047px;">beans</span>
<svg class="abs" style="left:639px;top:493px" width="6" height="12" viewBox="0 0 6 12"><path d="M1.5 2 L4.5 6 L1.5 10" stroke="#6e7173" fill="none" stroke-width="1.2"/></svg>
<span class="abs" style="left:656.5px;top:488.5px;font-size:15.5px;line-height:20px;color:#bbbbbb;letter-spacing:0.129px;">bean</span>
<div class="abs" style="left:482px;top:513.2px;width:1266px;height:1.6px;background:#2f3133"></div>
<div class="abs tabs" style="left:482px;top:514.8px;width:1266px;height:33.7px">
<div class="abs" style="left:0px;top:0;width:243.5px;height:100%;background:#4e5254"></div><div class="abs" style="left:0px;bottom:0;width:243.5px;height:4px;background:#747a80"></div><svg class="abs" style="left:9.699999999999989px;top:7px" width="22" height="22" viewBox="0 0 22 22"><path d="M7.5 1 H15 V9.6 H3 V5.5 Z" fill="#9aa7b0"/><path d="M6.8 1.2 V4.8 H3.2 Z" fill="#b9c3c9"/><rect x="0" y="10.8" width="9" height="9.2" fill="#d4683a"/><path d="M5.2 12.8 L2.3 15.4 L5.2 18" stroke="#4a2a1c" fill="none" stroke-width="1.3"/><path d="M8.6 18.6 C7.6 14 11.5 11.6 19.6 11.6 C20.4 17.5 15.5 21 9.6 19.4 Z" fill="#62b543"/><path d="M9.2 18.8 C12 16 15 14.4 18.4 13" stroke="#9ad77f" fill="none" stroke-width="0.8"/></svg><span class="tl abs" style="left:33.89999999999998px;top:7px;letter-spacing:0.130px;">applicationContext-1.xml</span><svg class="abs" style="left:226.5px;top:11px" width="11" height="11" viewBox="0 0 11 11"><path d="M1 1 L10 10 M10 1 L1 10" stroke="#6e7173" stroke-width="1.3"/></svg>
</div>
<div class="abs ed" style="left:482px;top:548.5px;width:1266px;height:385.5px;--lh:42.4px"><div class="cur" style="top:61.800000000000004px"></div><div class="gut"></div><div class="gl"></div><div class="abs" style="left:157.6px;top:99px;width:1px;height:144px;background:#343637"></div><div class="ln" style="top:-10.6px;">10</div><div class="cl" style="left:100.20000000000005px;top:-10.6px">        <span class="w"><span class="t">&lt;constructor-arg</span><span class="a"> name</span><span class="v">="origin"</span><span class="a"> value</span><span class="v">="<i class="cj">美国</i>"</span><span class="t">&gt;&lt;/constructor-arg&gt;</span></span></div><div class="ln" style="top:25.6px;">11</div><svg class="abs" style="left:81.5px;top:33.6px" width="16" height="20" viewBox="0 0 16 20"><path d="M1 19 V7 L8 1 L15 7 V19 Z" fill="#313335" stroke="#606366" stroke-width="1"/><path d="M4.5 12 h7" stroke="#606366" stroke-width="1"/></svg><div class="cl" style="left:100.20000000000005px;top:25.6px">    <span class="t">&lt;/bean&gt;</span></div><div class="ln" style="top:61.800000000000004px;color:#a4a3a3;">12</div><svg class="abs" style="left:81.5px;top:72.10000000000001px" width="16" height="20" viewBox="0 0 16 20"><path d="M1 1 V13 L8 19 L15 13 V1 Z" fill="#313335" stroke="#606366" stroke-width="1"/><path d="M4.5 8 h7" stroke="#606366" stroke-width="1"/></svg><div class="cl" style="left:100.20000000000005px;top:61.800000000000004px">    <span class="t m">&lt;bean</span><span class="a"> id</span><span class="v">="apple3"</span><span class="a"> class</span><span class="v">="com.<span style="display:inline;text-decoration:underline wavy #5f9a50 1.5px;text-underline-offset:1.5px">imooc</span>.spring.ioc.entity.Apple"</span><span class="t">&gt;</span></div><div class="ln" style="top:98.00000000000001px;">13</div><div class="cl" style="left:100.20000000000005px;top:98.00000000000001px">        <span class="w"><span class="t">&lt;constructor-arg</span><span class="a"> index</span><span class="v">="0"</span><span class="a"> value</span><span class="v">="<i class="cj">青苹果</i>"</span><span class="t">&gt;&lt;/constructor-arg&gt;</span></span></div><div class="ln" style="top:134.20000000000002px;">14</div><div class="cl" style="left:100.20000000000005px;top:134.20000000000002px">        <span class="w"><span class="t">&lt;constructor-arg</span><span class="a"> index</span><span class="v">="1"</span><span class="a"> value</span><span class="v">="<i class="cj">绿色</i>"</span><span class="t">&gt;&lt;/constructor-arg&gt;</span></span></div><div class="ln" style="top:170.4px;">15</div><div class="cl" style="left:100.20000000000005px;top:170.4px">        <span class="w"><span class="t">&lt;constructor-arg</span><span class="a"> index</span><span class="v">="2"</span><span class="a"> value</span><span class="v">="<i class="cj">中国</i>"</span><span class="t">&gt;&lt;/constructor-arg&gt;</span></span></div><div class="ln" style="top:206.60000000000002px;">16</div><div class="cl" style="left:100.20000000000005px;top:206.60000000000002px">        <span class="w"><span class="t">&lt;constructor-arg</span><span class="a"> index</span><span class="v">="3"</span><span class="a"> value</span><span class="v">="12.5"</span><span class="t">&gt;&lt;/constructor-arg&gt;</span></span></div><div class="ln" style="top:242.80000000000004px;">17</div><svg class="abs" style="left:81.5px;top:250.80000000000004px" width="16" height="20" viewBox="0 0 16 20"><path d="M1 19 V7 L8 1 L15 7 V19 Z" fill="#313335" stroke="#606366" stroke-width="1"/><path d="M4.5 12 h7" stroke="#606366" stroke-width="1"/></svg><div class="cl" style="left:100.20000000000005px;top:242.80000000000004px">    <span class="t m">&lt;/bean&gt;</span></div><div class="ln" style="top:279.0px;">18</div><div class="ln" style="top:315.2px;">19</div><div class="ln" style="top:351.4px;">20</div><svg class="abs" style="left:81.5px;top:359.4px" width="16" height="20" viewBox="0 0 16 20"><path d="M1 19 V7 L8 1 L15 7 V19 Z" fill="#313335" stroke="#606366" stroke-width="1"/><path d="M4.5 12 h7" stroke="#606366" stroke-width="1"/></svg><div class="cl" style="left:100.20000000000005px;top:351.4px"><span class="t">&lt;/beans&gt;</span></div></div>
<div class="abs" style="left:482px;top:934px;width:1266px;height:5px;background:#3b3d3f"></div>
<div class="abs" style="left:1641.5px;top:574px;width:110px;height:36.5px;background:#464747;border-radius:4px"></div>
<svg class="abs" style="left:1653px;top:583px" width="20" height="20" viewBox="0 0 20 20"><circle cx="10" cy="10" r="9" fill="#db4437"/><path d="M10 10 L2.2 5.5 A9 9 0 0 0 10 19 Z" fill="#0f9d58"/><path d="M10 10 L10 19 A9 9 0 0 0 17.8 5.5 Z" fill="#ffcd40"/><circle cx="10" cy="10" r="4.2" fill="#f1f1f1"/><circle cx="10" cy="10" r="3.2" fill="#4285f4"/></svg>
<svg class="abs" style="left:1685px;top:583px" width="20" height="20" viewBox="0 0 20 20"><defs><linearGradient id="ffg" x1="0.85" y1="0.1" x2="0.15" y2="0.9"><stop offset="0" stop-color="#ffe226"/><stop offset="0.45" stop-color="#ff8a16"/><stop offset="1" stop-color="#e31587"/></linearGradient></defs><circle cx="10" cy="10.2" r="9" fill="url(#ffg)"/><circle cx="9.6" cy="7.6" r="4.6" fill="#1d4fc4"/><path d="M4.2 8.5 C5 13.5 9.5 14.6 13.4 11.8 C11 12.6 8.2 11.6 7.4 9.4 Z" fill="#ff9a1c"/><path d="M11.6 1.4 C16 3 18 7.4 16.2 12.4 C16.4 8.4 14.6 5.8 11.8 4.4 Z" fill="#ffe640"/></svg>
<svg class="abs" style="left:1718px;top:583px" width="20" height="20" viewBox="0 0 20 20"><circle cx="10" cy="10" r="9.1" fill="#d3dbe6"/><circle cx="10" cy="10" r="7.9" fill="#3a93ee"/><path d="M15.2 4.8 L11 11 L9 9 Z" fill="#ee4a4a"/><path d="M4.8 15.2 L9 9 L11 11 Z" fill="#f2f2f2"/></svg>
<div class="abs" style="left:869px;top:408.2px;font-size:30px;line-height:40px;color:#e8201c;white-space:nowrap;text-spacing-trim:space-all;font-family:"Liberation Sans", "Noto Sans CJK SC", sans-serif">在不同的配置文件中，【<span style="letter-spacing:2px;margin-left:1px">id</span>】属性出现了重复；这不会报错，运行<br>也不会报错（因为这是在不同配置文件中出现的重复）</div>
<div class="abs" style="left:1023px;top:46px;width:247px;height:74px;border:2px solid #e02128"></div>
<div class="abs" style="left:118px;top:416px;width:241px;height:67px;border:2px solid #e02128"></div>
<div class="abs" style="left:472px;top:508px;width:256px;height:52px;border:2px solid #e02128"></div>
<svg class="abs" style="left:0;top:0;pointer-events:none" width="1748" height="939" viewBox="0 0 1748 939"><g stroke="#e0181f" fill="none" stroke-linecap="round"><path d="M760 217.5 C800 219 845 217.5 868 217.5 C874 218 878 219.5 882 221" stroke-width="3"/><path d="M1130 258.5 C1170 258 1200 257.5 1215 258.5 C1225 260.5 1235 260 1244 259.5" stroke-width="3.5"/><path d="M704 649 L902 649" stroke-width="3"/><path d="M1123 686.5 C1180 684 1250 685 1301 685" stroke-width="3"/></g></svg>
<span class="abs" style="left:1520.4px;top:909.5px;font-size:16px;line-height:20px;color:#c9c9c9;white-space:nowrap;letter-spacing:-0.087px;">https://blog.csdn.net/csucsgoat</span>
</body></html>
